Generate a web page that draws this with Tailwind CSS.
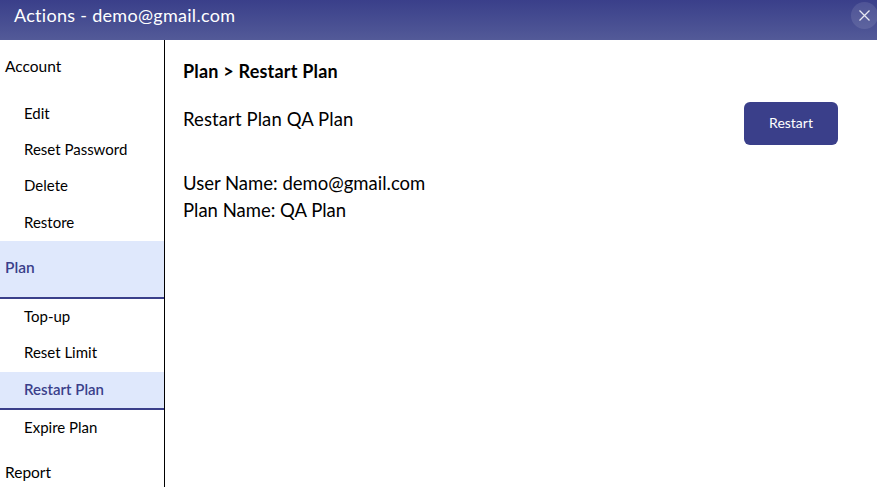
<!DOCTYPE html>
<html lang="en">
<head>
  <meta charset="UTF-8" />
  <meta name="viewport" content="width=device-width, initial-scale=1" />
  <title>Actions</title>
  <script src="https://cdn.jsdelivr.net/npm/@tailwindcss/browser@4"></script>
</head>
<body class="h-[487px] overflow-hidden bg-white text-black font-['Lato','Noto_Sans',sans-serif]">
  <header class="h-10 flex items-center justify-between pl-3.5 pb-[10px] bg-gradient-to-b from-[#3a3f8a] to-[#535a98] text-white">
    <h1 class="text-[18px] tracking-[0.29px]">Actions - demo@gmail.com</h1>
    <button class="size-[27px] mr-[-1px] rounded-full bg-white/10 flex items-center justify-center">
      <svg class="size-[11px]" viewBox="0 0 11 11" fill="none" stroke="#e6e7f2" stroke-width="1.3"><path d="M.5.5l10 10M10.5.5l-10 10" /></svg>
    </button>
  </header>

  <div class="flex h-[447px]">
    <aside class="w-[165px] shrink-0 border-r border-black text-[15px]">
      <div class="h-[56px] pl-[5px] pt-[15px] text-[15.5px]">Account</div>
      <a class="h-9 pl-[24px] pb-[2px] flex items-center">Edit</a>
      <a class="h-9 pl-[24px] pb-[2px] flex items-center">Reset Password</a>
      <a class="h-9 pl-[24px] pb-[2px] flex items-center">Delete</a>
      <a class="h-[37px] pl-[24px] flex items-center">Restore</a>
      <div class="h-[58px] pl-[5px] pb-[3px] flex items-center text-[15.5px] font-semibold text-[#3a3f8a] bg-[#dfe8fc] border-b-2 border-[#3a3f8a]">Plan</div>
      <a class="h-9 pl-[24px] pb-[2px] flex items-center">Top-up</a>
      <a class="h-[37px] pl-[24px] pb-[2px] flex items-center">Reset Limit</a>
      <a class="h-[38px] pl-[24px] pb-[1px] flex items-center font-semibold text-[#3a3f8a] bg-[#dfe8fc] border-b-2 border-[#3a3f8a]">Restart Plan</a>
      <a class="h-9 pl-[24px] pb-[2px] flex items-center">Expire Plan</a>
      <div class="pl-[5px] pt-[15px] text-[15.5px]">Report</div>
    </aside>

    <main class="flex-1 pl-[18px] pr-[39px] pt-[21px]">
      <h2 class="text-[18px] leading-5 font-bold tracking-[0.2px]">Plan &gt; Restart Plan</h2>
      <div class="flex justify-between items-start mt-[21px]">
        <p class="text-[18.5px] leading-[34px] tracking-[0.1px]">Restart Plan QA Plan</p>
        <button class="w-[94px] h-[43px] pb-[3px] rounded-md bg-[#3a3f8a] text-white text-[14px]">Restart</button>
      </div>
      <div class="mt-[25px] text-[18.5px] leading-[27px]">
        <p>User Name: demo@gmail.com</p>
        <p>Plan Name: QA Plan</p>
      </div>
    </main>
  </div>
</body>
</html>
